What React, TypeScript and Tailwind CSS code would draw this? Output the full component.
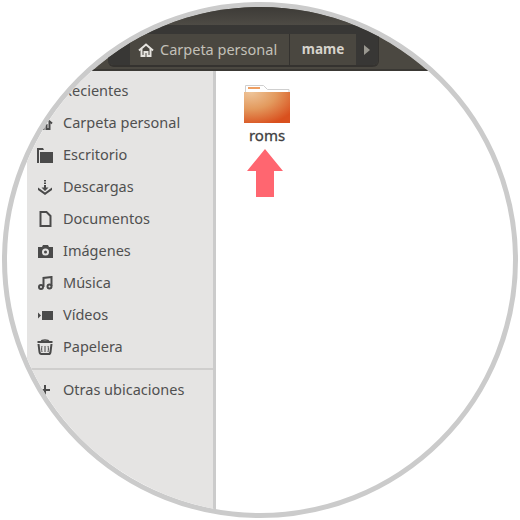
import React from 'react';

const sans = 'font-["Noto_Sans",sans-serif]';

const ClockIcon = () => (
  <svg width="14" height="14" viewBox="0 0 14 14" fill="none" stroke="#4a4a4a" strokeWidth="2">
    <circle cx="7" cy="7" r="6" />
    <path d="M7 3v4h3" />
  </svg>
);
const HomeOutline = ({ color }: { color: string }) => (
  <svg width="16" height="14" viewBox="0 0 16 14" fill="none" stroke={color} strokeWidth="2">
    <path d="M1 7.500l7-6 7 6" />
    <path d="M3.500 6v7h3v-4h3v4h3v-7" />
  </svg>
);
const FolderIcon = () => (
  <svg width="16" height="15" viewBox="0 0 16 15" fill="#4a4a4a">
    <path d="M0 0h6l1 2h-5v13h-2z" />
    <path d="M3 4h13v11h-13z" />
  </svg>
);
const DownloadIcon = () => (
  <svg width="14" height="15" viewBox="0 0 14 15" fill="#4a4a4a">
    <path d="M6 0h2v1.500h-2zM6 2.500h2v1.500h-2zM6 5h2v2.500h2.500l-3.500 3.500-3.500-3.500h2.500z" />
    <path d="M0 7.500l7 5 7-5v2.500l-7 5-7-5z" />
  </svg>
);
const DocIcon = () => (
  <svg width="13" height="16" viewBox="0 0 13 16" fill="none" stroke="#4a4a4a" strokeWidth="2">
    <path d="M1.500 1h6l4 4v10h-10z" />
  </svg>
);
const CameraIcon = () => (
  <svg width="15" height="13" viewBox="0 0 15 13">
    <path d="M0 2h4l1-2h5l1 2h4v11h-15z" fill="#4a4a4a" />
    <circle cx="7.500" cy="7" r="3.500" fill="#e5e4e3" />
    <circle cx="7.500" cy="7" r="1.500" fill="#4a4a4a" />
  </svg>
);
const MusicIcon = () => (
  <svg width="15" height="14" viewBox="0 0 15 14" fill="none" stroke="#4a4a4a" strokeWidth="2">
    <path d="M5.500 11v-9l8-1v9" />
    <circle cx="3" cy="11" r="2" />
    <circle cx="11.500" cy="10.500" r="2" />
  </svg>
);
const VideoIcon = () => (
  <svg width="15" height="9" viewBox="0 0 15 9" fill="#4a4a4a">
    <path d="M0 1.500l3 3-3 3z" />
    <path d="M4 0h11v9h-11z" />
  </svg>
);
const TrashIcon = () => (
  <svg width="16" height="16" viewBox="0 0 16 16" fill="none" stroke="#4a4a4a">
    <path d="M0.500 3h15" strokeWidth="2" />
    <path d="M4.500 2c0-1.500 7-1.500 7 0" strokeWidth="1.500" />
    <path d="M1.500 5l1 8c0.200 1.500 1 2 2 2h7c1 0 1.800-0.500 2-2l1-8" strokeWidth="2" />
    <path d="M5 7c-0.500 2-0.500 4 0 6M8 7v6M11 7c0.500 2 0.500 4 0 6" strokeWidth="1" />
  </svg>
);
const PlusIcon = () => (
  <svg width="10" height="10" viewBox="0 0 10 10" fill="#4a4a4a">
    <path d="M4 0h2v4h4v2h-4v4h-2v-4h-4v-2h4z" />
  </svg>
);

const places = [
  { label: 'Recientes', icon: <ClockIcon /> },
  { label: 'Carpeta personal', icon: <HomeOutline color="#4a4a4a" /> },
  { label: 'Escritorio', icon: <FolderIcon /> },
  { label: 'Descargas', icon: <DownloadIcon /> },
  { label: 'Documentos', icon: <DocIcon /> },
  { label: 'Imágenes', icon: <CameraIcon /> },
  { label: 'Música', icon: <MusicIcon /> },
  { label: 'Vídeos', icon: <VideoIcon /> },
  { label: 'Papelera', icon: <TrashIcon /> },
];

const SideRow = ({ label, icon }: { label: string; icon: React.ReactNode }) => (
  <div className="flex h-8 items-center">
    <span className="flex w-[36px] justify-center">{icon}</span>
    <span className="text-[14.5px] text-[#505050]">{label}</span>
  </div>
);

export default function App() {
  return (
    <div className={`flex h-[520px] w-[520px] items-center justify-center bg-white ${sans}`}>
      <div className="flex h-[516px] w-[516px] flex-col overflow-hidden rounded-full border-[5px] border-[#cbcbcb] bg-white">
        {/* Header */}
        <div className="flex h-[64px] shrink-0 flex-col border-b-2 border-[#3a3834] bg-[#4b4841]">
          <div className="h-[18px] bg-gradient-to-b from-[#3d3b37] to-[#4e4b45]" />
          <div className="h-[9px] bg-[#383735]" />
          <div className="flex h-[33px] items-stretch pl-[101px]">
            <div className="flex overflow-hidden rounded-b-md border-b-2 border-[#34322f] shadow-[1px_0_0_#34322f]">
              <div className="w-[22px] bg-[#383735]" />
              <div className="flex w-[160px] items-center gap-[6px] border-r border-[#34322f] bg-[#4a4740] pl-[8px]">
                <HomeOutline color="#e6e4df" />
                <span className="text-[14.5px] text-[#c3c0b8]">Carpeta personal</span>
              </div>
              <div className="flex w-[66px] items-center justify-center bg-[#4a4740]">
                <span className="text-[13.5px] font-bold text-[#d6d3cc]">mame</span>
              </div>
              <div className="flex w-[22px] items-center justify-center bg-[#383735]">
                <svg width="6" height="10" viewBox="0 0 6 10" fill="#9a9890">
                  <path d="M0 0l6 5-6 5z" />
                </svg>
              </div>
            </div>
          </div>
        </div>

        {/* Body */}
        <div className="flex min-h-0 flex-1 pl-[20px]">
          <div className="flex w-[186px] shrink-0 flex-col bg-[#e5e4e3] pt-[4px]">
            {places.map((p) => (
              <SideRow key={p.label} label={p.label} icon={p.icon} />
            ))}
            <div className="mt-[5px] h-[2px] bg-[#cfcecd]" />
            <div className="mt-[4px]">
              <SideRow label="Otras ubicaciones" icon={<PlusIcon />} />
            </div>
          </div>
          <div className="w-[3px] shrink-0 bg-[#cbcbcb]" />
          <div className="flex-1 pl-[27px] pt-[14px]">
            <div className="flex w-[48px] flex-col items-center">
              <svg width="47" height="39" viewBox="0 0 47 39">
                <defs>
                  <radialGradient id="fold" cx="0.15" cy="0" r="1.1">
                    <stop offset="0" stopColor="#eec59a" />
                    <stop offset="0.5" stopColor="#e39a5e" />
                    <stop offset="1" stopColor="#d9501e" />
                  </radialGradient>
                </defs>
                <path d="M1.500 0.500h18l4 4h21.500v6h-43.500z" fill="#fff" stroke="#cfcfcf" />
                <path d="M4 2h12v2h-12z" fill="#ee9f62" />
                <path d="M0 7h46v31h-46z" fill="url(#fold)" />
              </svg>
              <span className="text-[15px] text-[#404040] [-webkit-text-stroke:0.3px_#404040]">roms</span>
              <svg className="mt-[2px] ml-[4px] self-start" width="36" height="48" viewBox="0 0 36 48" fill="#ff6670">
                <path d="M18 0l18 22h-9v26h-18v-26h-9z" />
              </svg>
            </div>
          </div>
        </div>
      </div>
    </div>
  );
}
